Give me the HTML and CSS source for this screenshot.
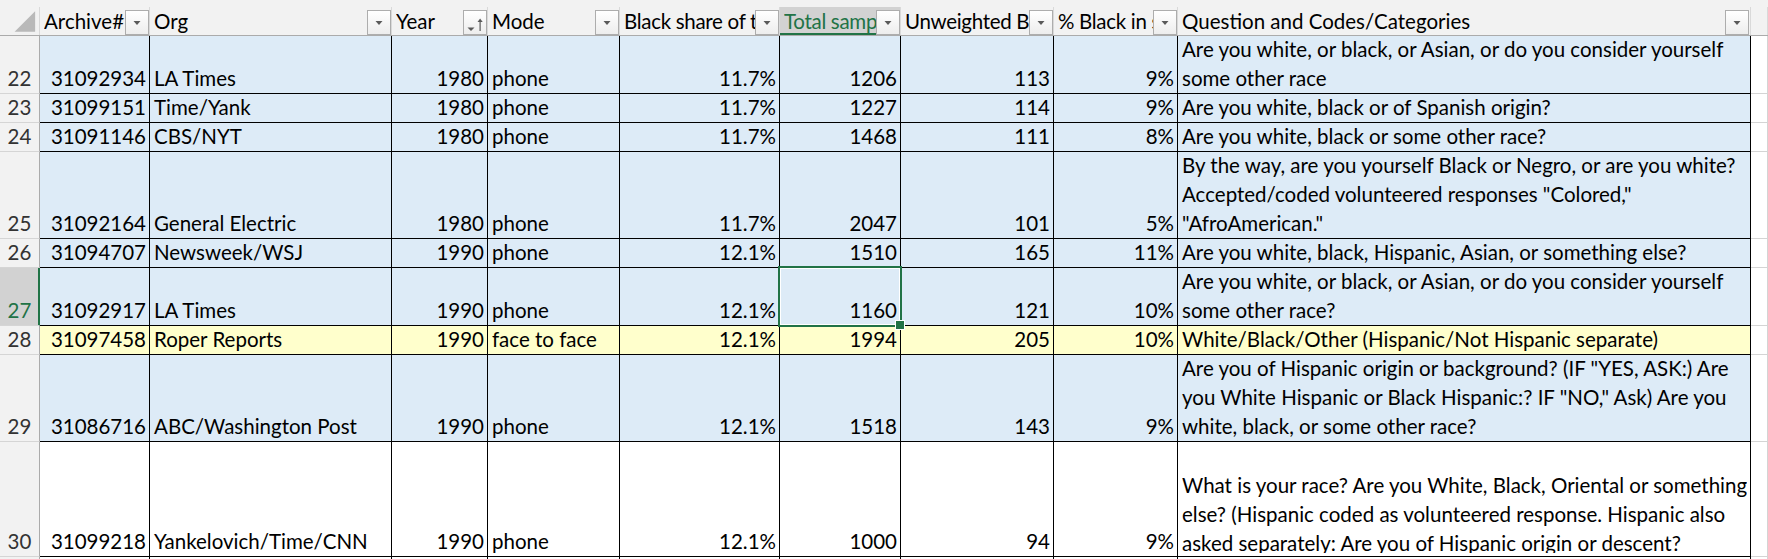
FILE: index.html
```html
<!DOCTYPE html>
<html>
<head>
<meta charset="utf-8">
<link rel="stylesheet" href="styles.css">
</head>
<body>
<div class="sheet">
  <div class="topband"></div>
  <div class="row hdr">
    <div class="hc corner"><svg width="40" height="28" viewBox="0 0 40 28"><polygon points="15,25 36,25 36,4" fill="#b9b9b9"/></svg></div>
    <div class="hc"><span class="lbl">Archive#</span><span class="fb"><svg width="22" height="23" viewBox="0 0 22 23"><polygon points="7.5,10 14.5,10 11,14" fill="#5a5a5a"/></svg></span></div>
    <div class="hc"><span class="lbl">Org</span><span class="fb"><svg width="22" height="23" viewBox="0 0 22 23"><polygon points="7.5,10 14.5,10 11,14" fill="#5a5a5a"/></svg></span></div>
    <div class="hc"><span class="lbl">Year</span><span class="fb"><svg width="22" height="23" viewBox="0 0 22 23"><polygon points="3.5,16.5 10.5,16.5 7,20" fill="#5a5a5a"/><rect x="15.5" y="9" width="1.2" height="11" fill="#5a5a5a"/><polygon points="13.5,11 18.7,11 16.1,7.5" fill="#5a5a5a"/></svg></span></div>
    <div class="hc"><span class="lbl">Mode</span><span class="fb"><svg width="22" height="23" viewBox="0 0 22 23"><polygon points="7.5,10 14.5,10 11,14" fill="#5a5a5a"/></svg></span></div>
    <div class="hc"><span class="lbl tight">Black share of t</span><span class="fb"><svg width="22" height="23" viewBox="0 0 22 23"><polygon points="7.5,10 14.5,10 11,14" fill="#5a5a5a"/></svg></span></div>
    <div class="hc active"><span class="lbl tight">Total samp</span><span class="fb"><svg width="22" height="23" viewBox="0 0 22 23"><polygon points="7.5,10 14.5,10 11,14" fill="#5a5a5a"/></svg></span></div>
    <div class="hc"><span class="lbl tight">Unweighted B</span><span class="fb"><svg width="22" height="23" viewBox="0 0 22 23"><polygon points="7.5,10 14.5,10 11,14" fill="#5a5a5a"/></svg></span></div>
    <div class="hc"><span class="lbl tight">% Black in s</span><span class="fb"><svg width="22" height="23" viewBox="0 0 22 23"><polygon points="7.5,10 14.5,10 11,14" fill="#5a5a5a"/></svg></span></div>
    <div class="hc qh"><span class="lbl">Question and Codes/Categories</span><span class="fb"><svg width="22" height="23" viewBox="0 0 22 23"><polygon points="7.5,10 14.5,10 11,14" fill="#5a5a5a"/></svg></span></div>
    <div class="hc"></div>
  </div>

  <div class="row h2 blue">
    <div class="rh"><span>22</span></div>
    <div class="c num"><span>31092934</span></div>
    <div class="c"><span>LA Times</span></div>
    <div class="c num"><span>1980</span></div>
    <div class="c"><span>phone</span></div>
    <div class="c num"><span>11.7%</span></div>
    <div class="c num"><span>1206</span></div>
    <div class="c num"><span>113</span></div>
    <div class="c num"><span>9%</span></div>
    <div class="c q"><span>Are you white, or black, or Asian, or do you consider yourself<br>some other race</span></div>
    <div class="c x"></div>
  </div>

  <div class="row h1 blue">
    <div class="rh"><span>23</span></div>
    <div class="c num"><span>31099151</span></div>
    <div class="c"><span>Time/Yank</span></div>
    <div class="c num"><span>1980</span></div>
    <div class="c"><span>phone</span></div>
    <div class="c num"><span>11.7%</span></div>
    <div class="c num"><span>1227</span></div>
    <div class="c num"><span>114</span></div>
    <div class="c num"><span>9%</span></div>
    <div class="c q"><span>Are you white, black or of Spanish origin?</span></div>
    <div class="c x"></div>
  </div>

  <div class="row h1 blue">
    <div class="rh"><span>24</span></div>
    <div class="c num"><span>31091146</span></div>
    <div class="c"><span>CBS/NYT</span></div>
    <div class="c num"><span>1980</span></div>
    <div class="c"><span>phone</span></div>
    <div class="c num"><span>11.7%</span></div>
    <div class="c num"><span>1468</span></div>
    <div class="c num"><span>111</span></div>
    <div class="c num"><span>8%</span></div>
    <div class="c q"><span>Are you white, black or some other race?</span></div>
    <div class="c x"></div>
  </div>

  <div class="row h3 blue">
    <div class="rh"><span>25</span></div>
    <div class="c num"><span>31092164</span></div>
    <div class="c"><span>General Electric</span></div>
    <div class="c num"><span>1980</span></div>
    <div class="c"><span>phone</span></div>
    <div class="c num"><span>11.7%</span></div>
    <div class="c num"><span>2047</span></div>
    <div class="c num"><span>101</span></div>
    <div class="c num"><span>5%</span></div>
    <div class="c q"><span>By the way, are you yourself Black or Negro, or are you white?<br>Accepted/coded volunteered responses "Colored,"<br>"AfroAmerican."</span></div>
    <div class="c x"></div>
  </div>

  <div class="row h1 blue">
    <div class="rh"><span>26</span></div>
    <div class="c num"><span>31094707</span></div>
    <div class="c"><span>Newsweek/WSJ</span></div>
    <div class="c num"><span>1990</span></div>
    <div class="c"><span>phone</span></div>
    <div class="c num"><span>12.1%</span></div>
    <div class="c num"><span>1510</span></div>
    <div class="c num"><span>165</span></div>
    <div class="c num"><span>11%</span></div>
    <div class="c q"><span>Are you white, black, Hispanic, Asian, or something else?</span></div>
    <div class="c x"></div>
  </div>

  <div class="row h2 blue">
    <div class="rh active"><span>27</span></div>
    <div class="c num"><span>31092917</span></div>
    <div class="c"><span>LA Times</span></div>
    <div class="c num"><span>1990</span></div>
    <div class="c"><span>phone</span></div>
    <div class="c num"><span>12.1%</span></div>
    <div class="c num sel"><span>1160</span></div>
    <div class="c num"><span>121</span></div>
    <div class="c num"><span>10%</span></div>
    <div class="c q"><span>Are you white, or black, or Asian, or do you consider yourself<br>some other race?</span></div>
    <div class="c x"></div>
  </div>

  <div class="row h1 yellow">
    <div class="rh"><span>28</span></div>
    <div class="c num"><span>31097458</span></div>
    <div class="c"><span>Roper Reports</span></div>
    <div class="c num"><span>1990</span></div>
    <div class="c"><span>face to face</span></div>
    <div class="c num"><span>12.1%</span></div>
    <div class="c num"><span>1994</span></div>
    <div class="c num"><span>205</span></div>
    <div class="c num"><span>10%</span></div>
    <div class="c q"><span>White/Black/Other (Hispanic/Not Hispanic separate)</span></div>
    <div class="c x"></div>
  </div>

  <div class="row h3 blue">
    <div class="rh"><span>29</span></div>
    <div class="c num"><span>31086716</span></div>
    <div class="c"><span>ABC/Washington Post</span></div>
    <div class="c num"><span>1990</span></div>
    <div class="c"><span>phone</span></div>
    <div class="c num"><span>12.1%</span></div>
    <div class="c num"><span>1518</span></div>
    <div class="c num"><span>143</span></div>
    <div class="c num"><span>9%</span></div>
    <div class="c q"><span>Are you of Hispanic origin or background? (IF "YES, ASK:) Are<br>you White Hispanic or Black Hispanic:? IF "NO," Ask) Are you<br>white, black, or some other race?</span></div>
    <div class="c x"></div>
  </div>

  <div class="row h4 white">
    <div class="rh"><span>30</span></div>
    <div class="c num"><span>31099218</span></div>
    <div class="c"><span>Yankelovich/Time/CNN</span></div>
    <div class="c num"><span>1990</span></div>
    <div class="c"><span>phone</span></div>
    <div class="c num"><span>12.1%</span></div>
    <div class="c num"><span>1000</span></div>
    <div class="c num"><span>94</span></div>
    <div class="c num"><span>9%</span></div>
    <div class="c q clip"><span>What is your race? Are you White, Black, Oriental or something<br>else? (Hispanic coded as volunteered response. Hispanic also<br>asked separately: Are you of Hispanic origin or descent?</span></div>
    <div class="c x"></div>
  </div>

  <div class="row h1 white">
    <div class="rh"></div>
    <div class="c"></div><div class="c"></div><div class="c"></div><div class="c"></div>
    <div class="c"></div><div class="c"></div><div class="c"></div><div class="c"></div>
    <div class="c"></div><div class="c x"></div>
  </div>
</div>
</body>
</html>
```

FILE: styles.css
```css
* { box-sizing: border-box; }

html, body {
  margin: 0;
  padding: 0;
  background: #ffffff;
}

body {
  font-family: Lato, "Open Sans", "Liberation Sans", sans-serif;
  font-size: 20.5px;
  color: #000;
}

.sheet {
  width: 1768px;
  height: 559px;
  overflow: hidden;
}

.topband {
  height: 7px;
  background: #f2f2f2;
}

.row {
  display: grid;
  grid-template-columns: 40px 110px 242px 96px 132px 160px 121px 153px 124px 573px 17px;
}

/* header */
.hdr {
  height: 29px;
  background: #f2f2f2;
  border-bottom: 1px solid #ababab;
}

.hc {
  display: flex;
  align-items: flex-end;
  min-width: 0;
  border-right: 1px solid #d9d9d9;
  padding-left: 4px;
  overflow: hidden;
}

.hc .lbl {
  flex: 1 1 auto;
  min-width: 0;
  overflow: hidden;
  white-space: nowrap;
  line-height: 28px;
}

.hc .lbl.tight {
  letter-spacing: -0.3px;
}

.hc.active {
  background: #d2d2d2;
  color: #217346;
  box-shadow: inset 0 -2px 0 #217346;
}

.hc.corner {
  padding-left: 0;
}

.hc.qh .fb {
  margin-right: 1px;
}

.fb {
  flex: 0 0 24px;
  width: 24px;
  height: 25px;
  border: 1px solid #adadad;
  background: linear-gradient(#ffffff, #ededed);
  display: block;
}

.fb svg {
  display: block;
}

/* data */
.h1 { height: 29px; }
.h2 { height: 58px; }
.h3 { height: 87px; }
.h4 { height: 115px; }

.rh {
  background: #f2f2f2;
  color: #333333;
  border-right: 1px solid #ababab;
  border-bottom: 1px solid #d5d5d5;
  display: flex;
  align-items: flex-end;
  justify-content: center;
  line-height: 29px;
  overflow: hidden;
}

.rh.active {
  background: #d2d2d2;
  color: #217346;
  border-right-color: #217346;
  box-shadow: inset -1px 0 0 #217346;
}

.c {
  display: flex;
  align-items: flex-end;
  min-width: 0;
  border-right: 1px solid #000;
  border-bottom: 1px solid #000;
  padding: 0 3px 0 4px;
  line-height: 29px;
  white-space: nowrap;
  overflow: hidden;
}

.c.num {
  justify-content: flex-end;
}

.c.q span {
  display: block;
}

.c.clip span {
  margin-bottom: -2px;
  clip-path: inset(0 0 5px 0);
}

.blue .c { background: #ddebf7; }
.yellow .c { background: #ffffcc; }
.white .c { background: #ffffff; }

.c.x {
  background: #ffffff;
  border-right-color: #d4d4d4;
  border-bottom-color: #d4d4d4;
}

.c.sel {
  position: relative;
  overflow: visible;
  z-index: 1;
}

.c.sel::after {
  content: "";
  position: absolute;
  left: -2px;
  top: -2px;
  right: -2px;
  bottom: -2px;
  border: 2px solid #217346;
  box-shadow: inset 0 0 0 1px #ffffff;
  pointer-events: none;
}

.c.sel::before {
  content: "";
  position: absolute;
  right: -5px;
  bottom: -5px;
  width: 8px;
  height: 8px;
  background: #217346;
  border: 1px solid #ffffff;
  z-index: 2;
}
```
